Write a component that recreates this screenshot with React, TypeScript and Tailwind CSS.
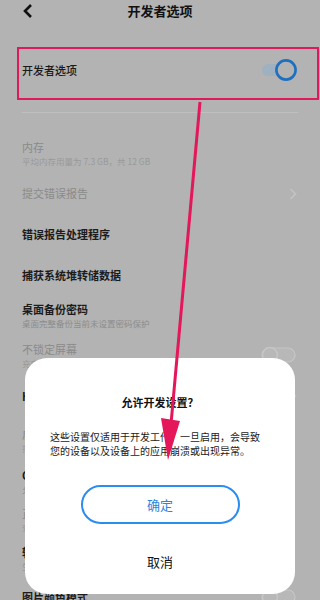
import React from 'react';

type Item = {
  title: string;
  sub?: string;
  h: number;
  muted?: boolean;
  right?: 'chevron' | 'switch';
};

const items: Item[] = [
  { title: '内存', sub: '平均内存用量为 7.3 GB，共 12 GB', h: 39, muted: true },
  { title: '提交错误报告', h: 41, muted: true, right: 'chevron' },
  { title: '错误报告处理程序', h: 41 },
  { title: '捕获系统堆转储数据', h: 40 },
  { title: '桌面备份密码', sub: '桌面完整备份当前未设置密码保护', h: 41 },
  { title: '不锁定屏幕', sub: '充电时屏幕不会休眠', h: 38, muted: true, right: 'switch' },
  { title: 'HDCP 检查', h: 44, right: 'chevron' },
  { title: '启用蓝牙 HCI 信息收集日志', sub: '捕获单个文件中的所有蓝牙 HCI 数据包', h: 44, muted: true },
  { title: 'OEM 解锁', sub: '允许解锁引导加载程序', h: 38 },
  { title: '正在运行的服务', sub: '查看和控制当前正在运行的服务', h: 39, muted: true },
  { title: '转储系统日志', sub: '生成当前系统日志文件', h: 39 },
  { title: '图片颜色模式', h: 38, right: 'switch' },
];

function OffSwitch() {
  return (
    <svg width="36" height="18" viewBox="0 0 36 18">
      <rect x="1" y="2" width="33" height="14" rx="7" fill="#b8b8b8" stroke="#c6c6c6" strokeWidth="1.2" />
      <circle cx="9" cy="9" r="7.5" fill="#b8b8b8" stroke="#c6c6c6" strokeWidth="1.4" />
    </svg>
  );
}

function Chevron() {
  return (
    <svg width="8" height="12" viewBox="0 0 8 12">
      <path d="M2 1.5 L6.5 6 L2 10.5" fill="none" stroke="#c4c4c4" strokeWidth="1.6" strokeLinecap="round" />
    </svg>
  );
}

export default function App() {
  return (
    <div
      className="relative h-[600px] w-[320px] overflow-hidden bg-[#b3b3b3]"
      style={{ fontFamily: '"Noto Sans CJK SC", "Noto Sans", sans-serif' }}
    >
      {/* header */}
      <div className="grid h-[22px] grid-cols-[1fr_auto_1fr] items-center">
        <div className="pl-[22px]">
          <svg width="12" height="16" viewBox="0 0 12 16">
            <path d="M9 2 L3 8 L9 14" fill="none" stroke="#111" strokeWidth="2.6" strokeLinejoin="miter" />
          </svg>
        </div>
        <div className="text-[13px] font-bold leading-[22px] text-[#111]">开发者选项</div>
        <div />
      </div>

      {/* developer options switch */}
      <div className="mt-[26px] flex h-[44px] items-center justify-between pl-[22px] pr-[22px]">
        <span className="text-[11px] font-medium text-[#1a1a1a]">开发者选项</span>
        <svg width="36" height="24" viewBox="0 0 36 24">
          <rect x="0" y="6" width="30" height="12" rx="6" fill="#9fb0c0" />
          <circle cx="24" cy="12" r="9.6" fill="#b3b3b3" stroke="#1f6fbf" strokeWidth="2.6" />
        </svg>
      </div>
      <div className="mx-[22px] mt-[20px] h-px bg-[#bfbfbf]" />

      <div className="pt-[21px]">
        {items.map((it) => (
          <div
            key={it.title}
            className="flex items-center justify-between pl-[22px] pr-[23px]"
            style={{ height: it.h }}
          >
            <div className="flex flex-col">
              <span
                className={
                  it.muted
                    ? 'text-[11px] leading-[15px] text-[#8a8a8a]'
                    : 'text-[11px] font-semibold leading-[15px] text-[#1c1c1c]'
                }
              >
                {it.title}
              </span>
              {it.sub && (
                <span className={it.muted ? 'text-[8.5px] leading-[12px] text-[#999]' : 'text-[8.5px] leading-[12px] text-[#8c8c8c]'}>
                  {it.sub}
                </span>
              )}
            </div>
            {it.right === 'chevron' && <Chevron />}
            {it.right === 'switch' && <OffSwitch />}
          </div>
        ))}
      </div>

      {/* annotation box */}
      <div className="absolute left-[17px] top-[47px] h-[53px] w-[302px] border-2 border-[#e0195a]" />

      {/* dialog */}
      <div className="absolute left-[25px] top-[358px] flex h-[236px] w-[270px] flex-col items-center rounded-[22px] bg-white">
        <div className="mt-[36px] text-[11px] font-bold leading-[16px] text-[#111]">允许开发设置？</div>
        <div className="mt-[20px] self-start pl-[25px] text-[10px] leading-[14px] text-[#1a1a1a]">
          <div className="whitespace-nowrap">这些设置仅适用于开发工作。一旦启用，会导致</div>
          <div className="whitespace-nowrap">您的设备以及设备上的应用崩溃或出现异常。</div>
        </div>
        <div className="mt-[27px] flex h-[39px] w-[159px] items-center justify-center rounded-full border-2 border-[#2d8cf0] text-[13px] text-[#2a84e0]">
          确定
        </div>
        <div className="mt-[29px] text-[13px] leading-[18px] text-[#111]">取消</div>
      </div>

      {/* annotation arrow */}
      <svg className="pointer-events-none absolute left-0 top-0" width="320" height="600" viewBox="0 0 320 600">
        <line x1="200" y1="102" x2="171" y2="424" stroke="#e3175a" strokeWidth="3" />
        <polygon points="161,418 180,421 168,460" fill="#e3175a" />
      </svg>
    </div>
  );
}
